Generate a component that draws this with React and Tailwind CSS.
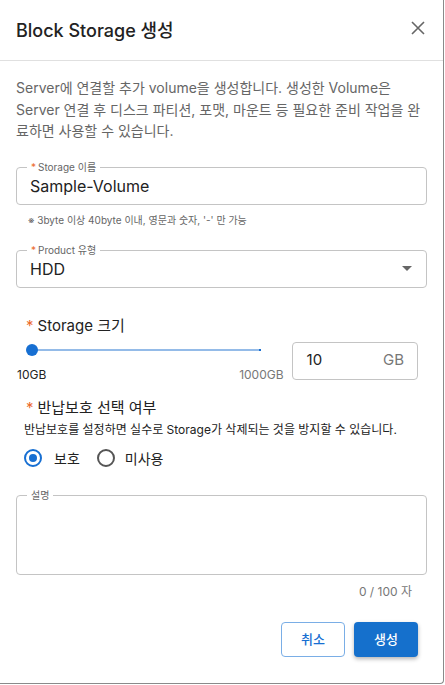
const font = { fontFamily: 'Inter, "Noto Sans CJK KR", sans-serif' };

function Req() {
    return <span className="text-[#ec6a2c] mr-1">*</span>;
}

function Outlined({ label, required, className, children }) {
    return (
        <div className={"relative border border-[#c4c4c4] rounded-[4px] " + className}>
            <span className="absolute -top-[8px] left-[10px] bg-white px-[4px] text-[10px] leading-[14px] text-[#666]">
                {required && <span className="text-[#ec6a2c] mr-[2px]">*</span>}
                {label}
            </span>
            {children}
        </div>
    );
}

export default function App() {
    return (
        <div className="w-[445px] h-[685px] bg-white" style={font}>
            <div className="w-[444px] h-[684px] border-r border-b border-[#8a8a8a] rounded-br-[4px] flex flex-col">
                <div className="h-[61px] shrink-0 flex items-center justify-between pl-4 pr-[18px] border-b border-[#e0e0e0]">
                    <h1 className="text-[18px] text-[#222] font-medium">Block Storage 생성</h1>
                    <svg width="14" height="14" viewBox="0 0 14 14" className="mb-[4px]">
                        <path d="M1 1L13 13M13 1L1 13" stroke="#666" strokeWidth="1.6" />
                    </svg>
                </div>

                <p className="px-4 pt-[16px] text-[14px] leading-[21.5px] text-[#666]">
                    Server에 연결할 추가 volume을 생성합니다. 생성한 Volume은 Server 연결 후 디스크 파티션, 포맷, 마운트 등 필요한 준비 작업을 완료하면 사용할 수 있습니다.
                </p>

                <div className="px-4 mt-[25px]">
                    <Outlined label="Storage 이름" required className="h-[38px] flex items-center px-[13px]">
                        <span className="text-[16px] text-[#222]">Sample-Volume</span>
                    </Outlined>
                    <p className="mt-[8px] pl-[12px] text-[10px] text-[#666]">※ 3byte 이상 40byte 이내, 영문과 숫자, '-' 만 가능</p>

                    <Outlined label="Product 유형" required className="mt-[22px] h-[38px] flex items-center justify-between px-[13px]">
                        <span className="text-[16px] text-[#222]">HDD</span>
                        <svg width="10" height="5" viewBox="0 0 10 5" className="mr-[1px]">
                            <path d="M0 0H10L5 5Z" fill="#666" />
                        </svg>
                    </Outlined>
                </div>

                <div className="pl-[17px] pr-[25px] mt-[28px]">
                    <div className="pl-[9px] text-[15px] text-[#222] leading-[20px]">
                        <Req />Storage 크기
                    </div>
                    <div className="flex items-start gap-[8px]">
                        <div className="w-[268px]">
                            <div className="relative h-[16px] mt-[6px] ml-[9px] w-[236px] flex items-center">
                                <div className="h-[2px] w-[229px] ml-[6px] bg-[#94bbe8]" />
                                <div className="absolute right-[1px] w-[2px] h-[2px] bg-[#1a6fd0]" />
                                <div className="absolute left-0 w-[12px] h-[12px] rounded-full bg-[#176fd2]" />
                            </div>
                            <div className="flex justify-between text-[12px] leading-[16px] mt-[9px]">
                                <span className="text-[#222]">10GB</span>
                                <span className="text-[#777]">1000GB</span>
                            </div>
                        </div>
                        <div className="w-[127px] h-[38px] mt-[6px] border border-[#c4c4c4] rounded-[4px] flex items-center justify-between pl-[14px] pr-[13px] text-[15px]">
                            <span className="text-[#222]">10</span>
                            <span className="text-[#777]">GB</span>
                        </div>
                    </div>

                    <div className="mt-[15px] pl-[9px] text-[15px] text-[#222] leading-[20px]">
                        <Req />반납보호 선택 여부
                    </div>
                    <p className="mt-[4px] pl-[7px] text-[12px] text-[#222] leading-[16px]">
                        반납보호를 설정하면 실수로 Storage가 삭제되는 것을 방지할 수 있습니다.
                    </p>
                    <div className="mt-[10px] pl-[7px] flex items-center text-[14px] text-[#222]">
                        <span className="w-[18px] h-[18px] rounded-full border-2 border-[#176fd2] flex items-center justify-center">
                            <span className="w-[8px] h-[8px] rounded-full bg-[#176fd2]" />
                        </span>
                        <span className="ml-[12px]">보호</span>
                        <span className="ml-[17px] w-[18px] h-[18px] rounded-full border-2 border-[#555]" />
                        <span className="ml-[10px]">미사용</span>
                    </div>
                </div>

                <div className="px-4 mt-[26px]">
                    <Outlined label="설명" className="h-[80px]" />
                    <p className="mt-[8px] pr-[15px] text-right text-[12px] text-[#777]">0 / 100 자</p>
                </div>

                <div className="mt-auto mb-[26px] pr-[25px] flex justify-end gap-[9px]">
                    <button className="w-[64px] h-[35px] rounded-[4px] border border-[#7aaee6] text-[#176fd2] text-[13px] font-medium bg-white">취소</button>
                    <button className="w-[64px] h-[35px] rounded-[4px] bg-[#1570cc] text-white text-[13px] font-medium shadow-[0_2px_4px_rgba(0,0,0,0.3)]">생성</button>
                </div>
            </div>
        </div>
    );
}
